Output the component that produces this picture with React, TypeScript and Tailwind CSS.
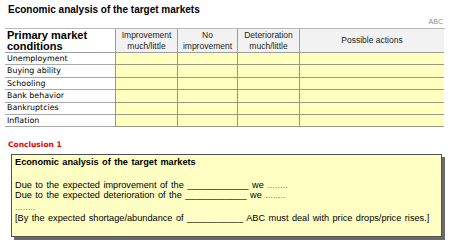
const rows = ["Unemployment", "Buying ability", "Schooling", "Bank behavior", "Bankruptcies", "Inflation"]

const heads = [
  ["Improvement", "much/little"],
  ["No", "improvement"],
  ["Deterioration", "much/little"],
  ["Possible actions"],
]

export default function App() {
  return (
    <div className="w-[450px] h-[246px] bg-white relative overflow-hidden font-['Liberation_Sans',Arial,sans-serif] text-black">
      <div className="pl-[8px] pt-[4px] text-[10px] font-bold leading-[12px]">Economic analysis of the target markets</div>

      <div className="flex justify-end pr-[7px] pt-[1px] text-[7px] leading-[9px] text-[#8a8a8a]">ABC</div>

      {/* table */}
      <div className="ml-[5px] mt-[2px] w-[440px] grid grid-cols-[110px_62px_60px_62px_145px] border-t border-[#b8b8b8]">
        <div className="h-[24px] pl-[2px] pt-[1px] text-[11px] font-bold leading-[11px] border-b border-[#a0a0a0]">
          Primary market
          <br />
          conditions
        </div>
        {heads.map((h, i) => (
          <div
            key={i}
            className="h-[24px] flex flex-col items-center justify-center bg-[#f2f2f2] border-l border-b border-[#9c9c9c] text-[8.5px] leading-[10.5px] text-[#222]"
          >
            {h.map((t) => (
              <span key={t}>{t}</span>
            ))}
          </div>
        ))}
        {rows.map((r) => (
          <>
            <div
              key={r}
              className="h-[12.4px] pl-[2px] flex items-center text-[7.9px] font-['DejaVu_Sans',Verdana,sans-serif] border-b border-[#a8a8a8]"
            >
              {r}
            </div>
            {[0, 1, 2, 3].map((c) => (
              <div key={r + c} className="h-[12.4px] bg-[#ffffc0] border-l border-b border-[#9a9880]" />
            ))}
          </>
        ))}
      </div>

      <div className="pl-[8px] mt-[13px] text-[7.5px] font-bold leading-[9px] text-[#e00000] font-['DejaVu_Sans',Verdana,sans-serif]">
        Conclusion 1
      </div>

      {/* conclusion box */}
      <div className="ml-[11px] mt-[5px] w-[431px] h-[83px] bg-[#ffffc4] border border-[#505050] shadow-[3px_3px_0_#6a6a6a] px-[3px] pt-[2px] text-[9.2px] leading-[10.5px] [word-spacing:0.9px]">
        <div className="font-bold">Economic analysis of the target markets</div>
        <div className="mt-[12px]">Due to the expected improvement of the ____________ we <span className="text-[#777]">........</span></div>
        <div>Due to the expected deterioration of the ____________ we <span className="text-[#777]">........</span></div>
        <div className="text-[#777] leading-[12px]">........</div>
        <div>[By the expected shortage/abundance of ___________ ABC must deal with price drops/price rises.]</div>
      </div>
    </div>
  )
}
